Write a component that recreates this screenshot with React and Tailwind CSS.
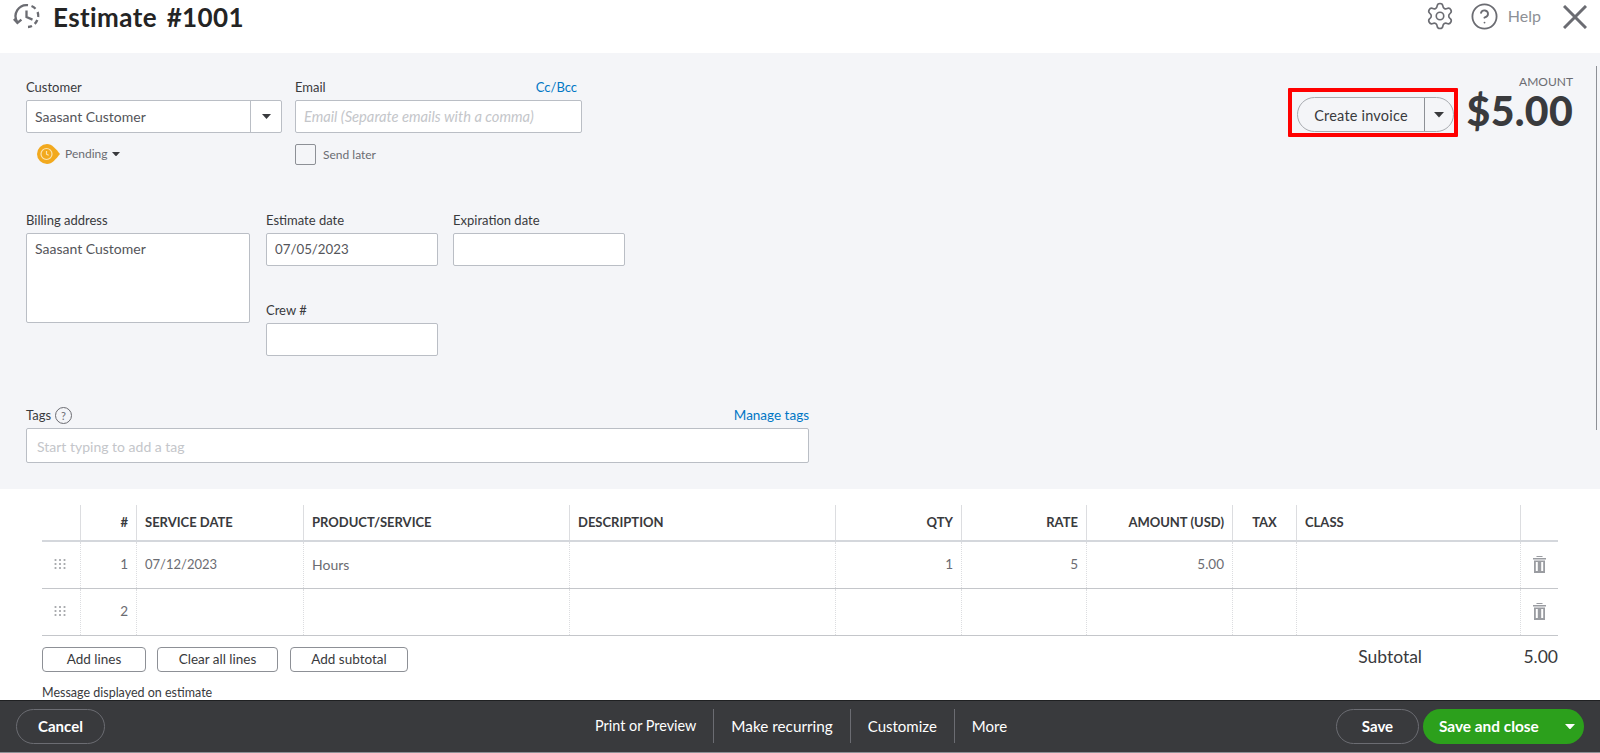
import { Settings, CircleHelp } from 'lucide-react';

const Caret = ({ className = 'text-[#393a3d]', w = 10, h = 5.5 }) => (
  <svg width={w} height={h} viewBox="0 0 11 6" className={className}>
    <path d="M0 0h11L5.5 6z" fill="currentColor" />
  </svg>
);

const HistoryIcon = () => (
  <svg width="27" height="26" viewBox="0 0 27 26" fill="none" stroke="#6b6c72" strokeWidth="2.3">
    <path d="M4.3 19A11 11 0 0 1 15 2.2" />
    <path d="M18.5 3a11 11 0 0 1 4 2.8" />
    <path d="M24.6 9a11 11 0 0 1 .6 5" />
    <path d="M24.3 17a11 11 0 0 1-2.6 3.8" />
    <path d="M19 23a11 11 0 0 1-4 1" />
    <path d="M0.8 16l3.6 4 4-3.4" />
    <path d="M13.5 7.5v6.5l6 2.6" />
  </svg>
);

const PendingIcon = () => (
  <svg width="23" height="20" viewBox="0 0 23 20">
    <path d="M10 0c5 0 9 5 13 10-4 5-8 10-13 10A10 10 0 0 1 10 0z" fill="#f2a91e" />
    <circle cx="9.5" cy="10" r="5.5" fill="none" stroke="#fbe3b0" strokeWidth="1.2" />
    <path d="M9.5 7v3.2l2.2 1" fill="none" stroke="#fbe3b0" strokeWidth="1.2" />
  </svg>
);

const Dots = () => (
  <svg width="12" height="11" viewBox="0 0 12 11" fill="#a0a2a6">
    {[1, 5, 9].map((y) =>
      [1.5, 6, 10.5].map((x) => <rect key={`${x}-${y}`} x={x - 0.9} y={y - 0.9} width="1.8" height="1.8" />)
    )}
  </svg>
);

const Trash = () => (
  <svg width="13" height="17" viewBox="0 0 13 17" fill="#9a9ca1">
    <path d="M3.5 0h6v1h-6zM0 2h13v1.5H0zM1 4.5h11V17H1zM2.8 6v9h2V6zm5.4 0v9h2V6z" fillRule="evenodd" />
  </svg>
);

const CloseIcon = () => (
  <svg width="24" height="24" viewBox="0 0 24 24" fill="none" stroke="#6b6c72" strokeWidth="3">
    <path d="M1 1l22 22M23 1L1 23" />
  </svg>
);

const Field = ({ label, right, className, children }) => (
  <div className={className}>
    <div className="h-[22px] flex justify-between text-[13px] leading-[18px] text-[#393a3d]">
      <span>{label}</span>
      {right}
    </div>
    {children}
  </div>
);

const boxClass = 'bg-white border border-[#babec5] rounded-[2px] text-[14px] text-[#54555a]';

const columns = [
  { label: '' },
  { label: '#', right: true },
  { label: 'SERVICE DATE' },
  { label: 'PRODUCT/SERVICE' },
  { label: 'DESCRIPTION' },
  { label: 'QTY', right: true },
  { label: 'RATE', right: true },
  { label: 'AMOUNT (USD)', right: true },
  { label: 'TAX', center: true },
  { label: 'CLASS' },
  { label: '' },
];

const gridCols = 'grid grid-cols-[39px_56px_167px_266px_266px_126px_125px_146px_64px_224px_37px]';

const Row = ({ values }) => (
  <div className={`${gridCols} h-[47px] border-b border-[#c4c6ca] text-[13.5px] text-[#6b6c72]`}>
    <div className="flex items-center justify-center border-r border-dotted border-[#dcdde0] pb-[2px] pr-[3px]">
      <Dots />
    </div>
    {values.map((v, i) => (
      <div
        key={i}
        className={`flex items-center px-[8px] pb-[1px] border-r border-dotted border-[#dcdde0] ${columns[i + 1].right ? 'justify-end' : ''}`}
      >
        {v}
      </div>
    ))}
    <div className="flex items-center justify-center pb-[1px]">
      <Trash />
    </div>
  </div>
);

const OutlineButton = ({ className, children }) => (
  <button className={`h-[25px] border border-[#8d9096] rounded-[4px] bg-white text-[13.5px] text-[#393a3d] ${className}`}>
    {children}
  </button>
);

export default function App() {
  return (
    <div className="relative w-full h-[753px] overflow-hidden flex flex-col bg-white font-['Lato','Noto_Sans',sans-serif] text-[#393a3d]">
      {/* Header */}
      <header className="h-[53px] shrink-0 flex items-start pl-[13px] pr-[13px] pt-[3px]">
        <HistoryIcon />
        <h1 className="ml-[13px] -mt-[1px] text-[26px] leading-[30px] font-bold tracking-[0.4px] [word-spacing:3px] text-[#242424]">
          Estimate #1001
        </h1>
        <div className="ml-auto -mt-[2px] flex items-center text-[#6b6c72]">
          <Settings className="w-[30px] h-[30px]" strokeWidth={1.3} />
          <CircleHelp className="w-[29px] h-[29px] ml-[15px]" strokeWidth={1.5} />
          <span className="ml-[9px] text-[16px] text-[#8d9096]">Help</span>
          <span className="ml-[22px] mt-[2px]">
            <CloseIcon />
          </span>
        </div>
      </header>

      {/* Estimate form */}
      <section className="h-[436px] shrink-0 bg-[#f4f5f8] pl-[26px] pr-[27px] pt-[25px]">
        <div className="flex justify-between h-[133px]">
          <div className="flex">
            <Field label="Customer" className="w-[256px]">
              <div className={`${boxClass} h-[33px] flex items-center`}>
                <span className="flex-1 pl-[8px]">Saasant Customer</span>
                <span className="w-[31px] h-full border-l border-[#babec5] flex items-center justify-center">
                  <Caret w={9} h={5} />
                </span>
              </div>
              <div className="flex items-center mt-[11px] ml-[11px] text-[12px] text-[#6b6c72]">
                <PendingIcon />
                <span className="ml-[5px] mr-[5px]">Pending</span>
                <Caret w={8} h={4.5} />
              </div>
            </Field>
            <Field
              label="Email"
              className="w-[287px] ml-[13px]"
              right={<a className="text-[13px] text-[#0077c5] mr-[5px]">Cc/Bcc</a>}
            >
              <div className={`${boxClass} h-[33px] flex items-center pl-[8px] italic !text-[14.7px] !text-[#c4c6ca]`}>
                Email (Separate emails with a comma)
              </div>
              <label className="flex items-center mt-[11px] text-[12px] text-[#6b6c72]">
                <span className="w-[21px] h-[21px] border border-[#8d9096] rounded-[2px] bg-[#f4f5f8]" />
                <span className="ml-[7px]">Send later</span>
              </label>
            </Field>
          </div>

          <div className="flex items-start">
            <div className="mt-[10px] w-[170px] h-[49px] border-[4px] border-[#f00] rounded-[1px] pl-[5px] pt-[5px]">
              <div className="flex w-[157px] h-[35px] border border-[#a8abb0] rounded-full bg-[#f4f5f8] text-[14.5px] text-[#393a3d]">
                <span className="w-[127px] flex items-center justify-center pt-[2px] border-r border-[#8d9096] tracking-[0.2px]">
                  Create invoice
                </span>
                <span className="flex-1 flex items-center justify-center pr-[1px] pt-[1px]">
                  <Caret />
                </span>
              </div>
            </div>
            <div className="ml-[5px] w-[110px] text-right">
              <div className="-mt-[4px] text-[12px] leading-[16px] text-[#6b6c72]">AMOUNT</div>
              <div className="-mt-[1px] text-[41px] leading-[44px] font-black tracking-[0.3px] text-[#393a3d] whitespace-nowrap">$5.00</div>
            </div>
          </div>
        </div>

        <div className="flex">
          <Field label="Billing address" className="w-[224px]">
            <div className={`${boxClass} h-[90px] pl-[8px] pt-[6px] leading-[18px]`}>Saasant Customer</div>
          </Field>
          <div className="w-[172px] ml-[16px]">
            <Field label="Estimate date">
              <div className={`${boxClass} h-[33px] flex items-center pl-[8px] !text-[13.3px]`}>07/05/2023</div>
            </Field>
            <Field label="Crew #" className="mt-[35px]">
              <div className={`${boxClass} h-[33px]`} />
            </Field>
          </div>
          <Field label="Expiration date" className="w-[172px] ml-[15px]">
            <div className={`${boxClass} h-[33px]`} />
          </Field>
        </div>

        <div className="w-[783px] mt-[50px]">
          <div className="h-[22px] flex items-start justify-between text-[13px] leading-[18px]">
            <span className="flex items-center">
              Tags
              <span className="ml-[4px] w-[17px] h-[17px] rounded-full border border-[#6b6c72] flex items-center justify-center text-[11px] leading-none text-[#6b6c72]">
                ?
              </span>
            </span>
            <a className="text-[13.5px] text-[#0077c5]">Manage tags</a>
          </div>
          <div className={`${boxClass} h-[35px] flex items-center pl-[10px] pt-[1px] !text-[#c4c6ca]`}>
            Start typing to add a tag
          </div>
        </div>
      </section>

      {/* scrollbar sliver over the form */}
      <div className="absolute right-[3px] top-[66px] w-[1.5px] h-[364px] bg-[#8d9096]" />

      {/* Line items */}
      <section className="flex-1 min-h-0 overflow-hidden pl-[42px] pr-[42px] pt-[16px]">
        <div className={`${gridCols} h-[37px] border-b-2 border-[#d4d7dc] text-[13px] font-bold text-[#393a3d]`}>
          {columns.map((col, i) => (
            <div
              key={i}
              className={`flex items-center px-[8px] ${i < columns.length - 1 ? 'border-r border-[#dcdde0]' : ''} ${col.right ? 'justify-end' : ''} ${col.center ? 'justify-center' : ''}`}
            >
              {col.label}
            </div>
          ))}
        </div>
        <Row values={['1', <span className="text-[13px]">07/12/2023</span>, <span className="text-[14px]">Hours</span>, '', '1', '5', '5.00', '', '']} />
        <Row values={['2', '', '', '', '', '', '', '', '']} />

        <div className="flex items-start mt-[11px]">
          <OutlineButton className="w-[104px]">Add lines</OutlineButton>
          <OutlineButton className="w-[121px] ml-[11px]">Clear all lines</OutlineButton>
          <OutlineButton className="w-[118px] ml-[12px]">Add subtotal</OutlineButton>
          <span className="ml-auto -mt-[1px] text-[17.5px] leading-[22px]">Subtotal</span>
          <span className="ml-[60px] w-[76px] -mt-[1px] text-right text-[17.5px] leading-[22px]">5.00</span>
        </div>
        <div className="mt-[13px] text-[12.5px] leading-[16px]">Message displayed on estimate</div>
      </section>

      {/* Action bar */}
      <footer className="h-[53px] shrink-0 flex items-start justify-between bg-[#393a3d] border-t border-[#1f2022] border-b border-b-[#8d9096] pl-[16px] pr-[16px] pt-[8px] text-white text-[15px]">
        <button className="w-[89px] h-[35px] rounded-full border border-[#6b6c72] font-bold">Cancel</button>
        <nav className="flex items-center h-[34px] ml-[490px]">
          <span className="text-[14.4px]">Print or Preview</span>
          <span className="w-px h-full bg-[#6b6c72] mx-[17px]" />
          <span className="text-[15.3px]">Make recurring</span>
          <span className="w-px h-full bg-[#6b6c72] mx-[17px]" />
          <span>Customize</span>
          <span className="w-px h-full bg-[#6b6c72] mx-[17px]" />
          <span>More</span>
        </nav>
        <div className="flex ml-auto">
          <button className="w-[83px] h-[35px] rounded-full border border-[#6b6c72] font-bold">Save</button>
          <button className="w-[161px] h-[35px] ml-[4px] rounded-full bg-[#2ca01c] font-bold text-[15.4px] flex items-center pl-[16px]">
            <span>Save and close</span>
            <Caret className="text-white ml-auto mr-[9px]" />
          </button>
        </div>
      </footer>
    </div>
  );
}
